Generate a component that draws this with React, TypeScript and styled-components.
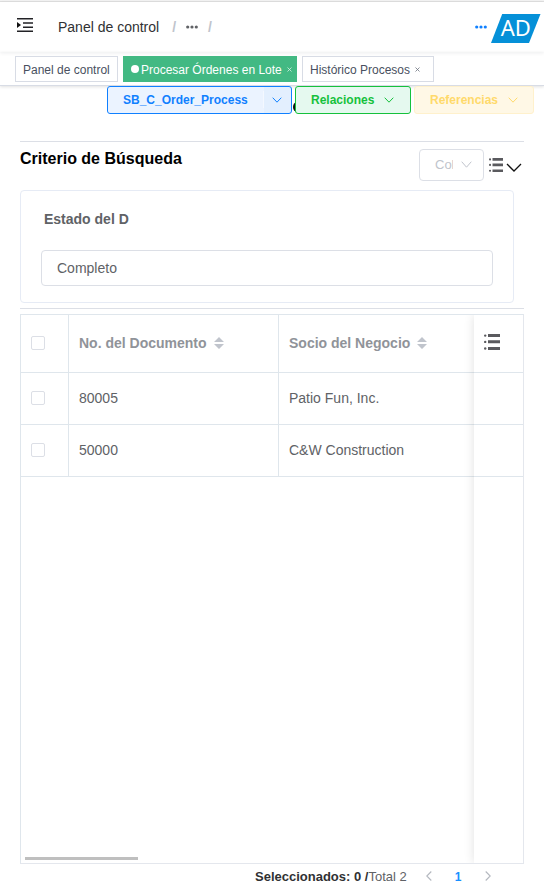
import React from "react";
import styled, { createGlobalStyle, css } from "styled-components";

const GlobalStyle = createGlobalStyle`
  * { box-sizing: border-box; }
  body {
    margin: 0;
    background: #fff;
    font-family: "Liberation Sans", Arial, sans-serif;
    font-size: 14px;
    color: #606266;
    overflow: hidden;
  }
`;

const Page = styled.div`
  height: 893px;
  display: flex;
  flex-direction: column;
  overflow: hidden;
`;

const TopStrip = styled.div`
  height: 2px;
  flex: none;
  background: #f3f3f3;
  border-bottom: 1px solid #dfdfdf;
`;

const Navbar = styled.header`
  height: 50px;
  flex: none;
  display: flex;
  align-items: center;
  justify-content: space-between;
  padding: 0 3px 0 17px;
  box-shadow: 0 1px 4px rgba(0, 21, 41, 0.08);
`;

const Breadcrumb = styled.nav`
  display: flex;
  align-items: center;
  color: #303133;

  > svg { flex: none; }
`;

const Crumb = styled.span`
  margin-left: 25px;
  line-height: 16px;
`;

const Slash = styled.span<{ $left: number; $right: number }>`
  margin: 0 ${(p) => p.$right}px 0 ${(p) => p.$left}px;
  font-weight: 700;
  color: #c0c4cc;
`;

const Account = styled.div`
  display: flex;
  align-items: center;
  gap: 4px;

  > svg:last-child { margin: 4px 0 0; }
`;

const TagsBar = styled.div`
  height: 34px;
  flex: none;
  display: flex;
  gap: 5px;
  padding: 4px 15px 0;
  border-bottom: 1px solid #d8dce5;
  box-shadow: 0 1px 3px rgba(0, 0, 0, 0.12);
`;

const Tag = styled.div<{ $width: number; $active?: boolean }>`
  width: ${(p) => p.$width}px;
  height: 26px;
  padding: 1px 0 0 7px;
  display: flex;
  align-items: center;
  white-space: nowrap;
  font-size: 12px;
  border: 1px solid ${(p) => (p.$active ? "#42b983" : "#d8dce5")};
  background: ${(p) => (p.$active ? "#42b983" : "#fff")};
  color: ${(p) => (p.$active ? "#fff" : "#495060")};
`;

const ActiveDot = styled.i`
  width: 8px;
  height: 8px;
  margin: -2px 2px 0 0;
  border-radius: 50%;
  background: #fff;
`;

const TagClose = styled.svg`
  width: 5px;
  height: 5px;
  margin: -1px 0 0 5px;
  stroke: currentColor;
  opacity: 0.8;
`;

const Actions = styled.div`
  position: relative;
  z-index: 1;
  height: 55px;
  flex: none;
  display: flex;
  align-items: flex-start;
  padding-left: 107px;
`;

const tones = {
  blue: css`color: #1080ff; background: #e8f3ff; border-color: #1080ff;`,
  green: css`color: #15c13c; background: #e5f9ef; border-color: #15c13c;`,
  yellow: css`color: #ffda6b; background: #fff8e6; border-color: #fff1cc;`,
};

const ActionButton = styled.button<{ $tone: keyof typeof tones; $width: number; $gap: number }>`
  position: relative;
  width: ${(p) => p.$width}px;
  height: 28px;
  margin-right: 3px;
  padding: 0 0 1px 15px;
  display: flex;
  align-items: center;
  gap: ${(p) => p.$gap}px;
  font: 700 12px "Liberation Sans", Arial, sans-serif;
  border: 1px solid;
  border-radius: 3px;
  ${(p) => tones[p.$tone]}

  > svg { flex: none; }
`;

const SplitLine = styled.i`
  align-self: stretch;
  width: 1px;
  margin: 4px 8px 4px 15px;
  background: #f4f8ff;
`;

const SplitAction = styled(ActionButton)`
  background: linear-gradient(to right, #ebf3ff 156px, #e3effe 156px);
`;

const HiddenMarker = styled.i`
  position: absolute;
  left: 293px;
  top: 16px;
  width: 8px;
  height: 10px;
  border-radius: 50%;
  background: #111;
`;

const Content = styled.main`
  width: 504px;
  margin-left: 20px;
  flex: none;
`;

const Criteria = styled.section`
  height: 168px;
  border: solid #dcdfe6;
  border-width: 1px 0;
`;

const CriteriaHead = styled.div`
  display: flex;
  height: 48px;
  padding-top: 7px;
`;

const Title = styled.h3`
  flex: 1;
  margin: 1px 0 0;
  font-size: 16px;
  line-height: 18px;
  color: #000;
`;

const ColumnSelect = styled.div`
  width: 65px;
  height: 32px;
  display: flex;
  align-items: center;
  padding: 0 0 2px 15px;
  font-size: 13px;
  color: #c0c4cc;
  border: 1px solid #dcdfe6;
  border-radius: 4px;
`;

const ColumnText = styled.span`
  width: 18px;
  margin-right: 8px;
  overflow: hidden;
  white-space: nowrap;
`;

const HeadIcons = styled.div`
  display: flex;
  gap: 3px;
  width: 40px;
  padding: 9px 0 0 5px;
`;

const Card = styled.div`
  width: 494px;
  height: 113px;
  padding: 20px;
  border: 1px solid #e6ebf5;
  border-radius: 4px;
`;

const Label = styled.label`
  display: block;
  height: 39px;
  padding-left: 3px;
  font-weight: 700;
  line-height: 17px;
`;

const Field = styled.div`
  width: 452px;
  height: 36px;
  padding-left: 15px;
  line-height: 35px;
  border: 1px solid #dcdfe6;
  border-radius: 4px;
`;

const TableFrame = styled.div`
  position: relative;
  height: 550px;
  margin-top: 5px;
  border: 1px solid;
  border-color: #dfe6ec #e4e7ed #e4e7ed #dfe6ec;
  overflow: hidden;
`;

const Row = styled.div<{ $head?: boolean }>`
  display: grid;
  grid-template-columns: 48px 210px 1fr;
  height: ${(p) => (p.$head ? 58 : 52)}px;
  border-bottom: 1px solid #dfe6ec;
  ${(p) => p.$head && css`font-weight: 700; color: #909399;`}
`;

const Cell = styled.div`
  display: flex;
  align-items: center;
  gap: 7px;
  padding: 0 0 2px 10px;
  white-space: nowrap;
  &:not(:last-child) { border-right: 1px solid #dfe6ec; }
`;

const Checkbox = styled.span`
  width: 14px;
  height: 14px;
  border: 1px solid #dcdfe6;
  border-radius: 2px;
`;

const FixedColumn = styled.div`
  position: absolute;
  top: 0;
  right: 0;
  bottom: 0;
  width: 49px;
  background: #fff;
  box-shadow: 0 0 10px rgba(0, 0, 0, 0.12);
`;

const FixedCell = styled.div<{ $height: number }>`
  height: ${(p) => p.$height}px;
  padding: 19px 0 0 10px;
  border-bottom: 1px solid #dfe6ec;
`;

const Scrollbar = styled.div`
  position: absolute;
  left: 4px;
  bottom: 3px;
  width: 113px;
  height: 3px;
  background: #bfbfbf;
`;

const Footer = styled.footer`
  display: flex;
  align-items: center;
  height: 24px;
  padding-left: 235px;
  font-size: 13px;
`;

const Selected = styled.strong`
  color: #303133;
`;

const Pager = styled.div`
  display: flex;
  align-items: center;
  margin-left: 19px;
  gap: 23px;
`;

const CurrentPage = styled.span`
  width: 7px;
  padding-top: 1px;
  font-size: 12px;
  font-weight: 700;
  color: #1890ff;
`;

const Chevron = ({ w = 10, h = 6 }) => (
  <svg width={w} height={h} viewBox={`0 0 ${w} ${h}`} fill="none">
    <path d={`M.7.7 ${w / 2} ${h - 0.8} ${w - 0.7}.7`} stroke="currentColor" />
  </svg>
);

const SideChevron = ({ next = false }) => (
  <svg width="6" height="10" viewBox="0 0 6 10" fill="none" stroke="#b4b8bf" strokeWidth="1.1">
    <path d={next ? "M.7.5 5.2 5 .7 9.5" : "M5.3.5.8 5l4.5 4.5"} />
  </svg>
);

const ListIcon = ({ w = 16, h = 16 }) => (
  <svg width={w} height={h} viewBox="0 0 16 16" fill="#5a5a5e">
    <path d="M4 0h12v3H4zM4 6.3h12v3H4zM4 13h12v3H4z" />
    <circle cx="1.2" cy="1.6" r="1.2" />
    <circle cx="1.2" cy="7.9" r="1.2" />
    <circle cx="1.2" cy="14.5" r="1.2" />
  </svg>
);

const SortIcon = () => (
  <svg width="10" height="12" viewBox="0 0 10 12" fill="#c0c4cc">
    <path d="M0 5 5 0l5 5zM0 7h10l-5 5z" />
  </svg>
);

const MenuIcon = () => (
  <svg width="16" height="18" viewBox="0 0 16 18">
    <path d="M0 .7h16M6 5h10M6 9.2h10M0 13.3h16" stroke="#222226" strokeWidth="1.4" />
    <path d="M0 4 4 7 0 10z" fill="#111" />
  </svg>
);

const Dots = ({ color = "#606266" }) => (
  <svg width="12" height="4" viewBox="0 0 12 4" fill={color}>
    <circle cx="1.7" cy="2" r="1.6" />
    <circle cx="6" cy="2" r="1.6" />
    <circle cx="10.3" cy="2" r="1.6" />
  </svg>
);

const Logo = () => (
  <svg width="50" height="30" viewBox="0 0 50 30">
    <path d="M11.2 0h38.300L38 29H0z" fill="#0590d8" />
    <text x="9.700" y="22" fill="#fff" fontFamily="Noto Sans, sans-serif" fontSize="22">AD</text>
  </svg>
);

const CloseIcon = () => (
  <TagClose viewBox="0 0 5 5"><path d="m.5.5 4 4m0-4-4 4" strokeWidth=".8" /></TagClose>
);

const orders = [
  { number: "80005", partner: "Patio Fun, Inc." },
  { number: "50000", partner: "C&W Construction" },
];

export default function App() {
  return (
    <Page>
      <GlobalStyle />
      <TopStrip />
      <Navbar>
        <Breadcrumb>
          <MenuIcon />
          <Crumb>Panel de control</Crumb>
          <Slash $left={13} $right={10}>/</Slash>
          <Dots />
          <Slash $left={10} $right={0}>/</Slash>
        </Breadcrumb>
        <Account>
          <Dots color="#1080ff" />
          <Logo />
        </Account>
      </Navbar>
      <TagsBar>
        <Tag $width={103}>Panel de control</Tag>
        <Tag $width={174} $active><ActiveDot />Procesar Órdenes en Lote<CloseIcon /></Tag>
        <Tag $width={132}>Histórico Procesos<CloseIcon /></Tag>
      </TagsBar>
      <Actions>
        <HiddenMarker />
        <SplitAction $tone="blue" $width={185} $gap={0}>
          SB_C_Order_Process<SplitLine /><Chevron />
        </SplitAction>
        <ActionButton $tone="green" $width={116} $gap={10}>Relaciones<Chevron /></ActionButton>
        <ActionButton $tone="yellow" $width={120} $gap={10}>Referencias<Chevron /></ActionButton>
      </Actions>
      <Content>
        <Criteria>
          <CriteriaHead>
            <Title>Criterio de Búsqueda</Title>
            <ColumnSelect><ColumnText>Col</ColumnText><Chevron w={11} h={7} /></ColumnSelect>
            <HeadIcons>
              <ListIcon w={14} h={14} />
              <svg width="16" height="16" viewBox="0 0 16 16" fill="none">
                <path d="M1 6 8 13 15 6" stroke="#111" strokeWidth="1.3" />
              </svg>
            </HeadIcons>
          </CriteriaHead>
          <Card>
            <Label>Estado del D</Label>
            <Field>Completo</Field>
          </Card>
        </Criteria>
        <TableFrame>
          <Row $head>
            <Cell><Checkbox /></Cell>
            <Cell>No. del Documento<SortIcon /></Cell>
            <Cell>Socio del Negocio<SortIcon /></Cell>
          </Row>
          {orders.map((order) => (
            <Row key={order.number}>
              <Cell><Checkbox /></Cell>
              <Cell>{order.number}</Cell>
              <Cell>{order.partner}</Cell>
            </Row>
          ))}
          <FixedColumn>
            <FixedCell $height={58}><ListIcon /></FixedCell>
            <FixedCell $height={52} />
            <FixedCell $height={52} />
          </FixedColumn>
          <Scrollbar />
        </TableFrame>
        <Footer>
          <Selected>Seleccionados: 0 /</Selected>Total 2
          <Pager><SideChevron /><CurrentPage>1</CurrentPage><SideChevron next /></Pager>
        </Footer>
      </Content>
    </Page>
  );
}
